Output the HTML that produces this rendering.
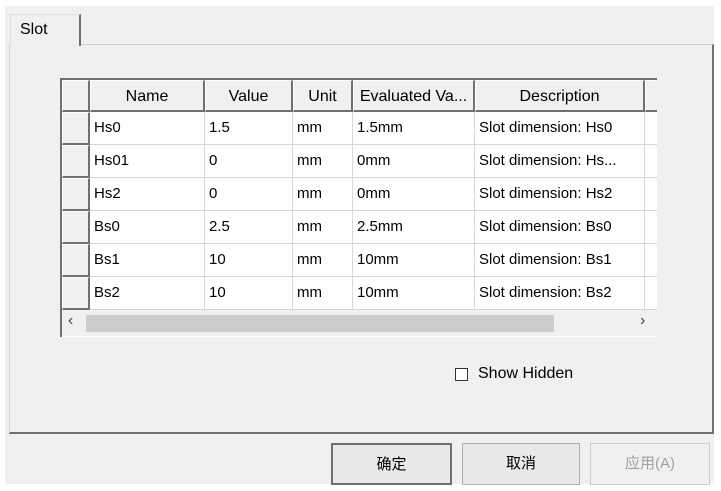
<!DOCTYPE html><html><head><style>
body{margin:0;width:721px;height:491px;background:#fff;position:relative;overflow:hidden;font-family:"Liberation Sans","Noto Sans CJK SC",sans-serif;font-size:15px;color:#000}
.bg{position:absolute;left:5px;top:6px;width:709px;height:478px;background:#f0f0f0}
.panel{position:absolute;left:9px;top:44px;width:702px;height:387px;border:1px solid #d0d0d0;border-right:2px solid #707070;border-bottom:2px solid #707070;background:#f0f0f0}
.tab{position:absolute;left:10px;top:14px;width:68px;height:31px;background:#f0f0f0;border:1px solid #ddd;border-right:2px solid #707070;border-bottom:none;z-index:2}
.tab span{position:absolute;left:9px;top:6px;font-size:16px}
.grid{position:absolute;left:60px;top:78px;width:597px;height:259px;background:#fff}
.c{position:absolute;box-sizing:border-box;border-right:1px solid #d8d8d8;border-bottom:1px solid #d8d8d8;padding-left:4px;line-height:32px;white-space:nowrap;overflow:hidden}
.h{background:#f0f0f0;border-left:1px solid #fff;border-top:1px solid #fff;border-right:2px solid #707070;border-bottom:2px solid #707070;text-align:center;padding:0;line-height:31px;font-size:16px}
.btn{position:absolute;top:443px;height:42px;background:#e8e8e8;border:1px solid #adadad;box-sizing:border-box;text-align:center;line-height:40px;font-size:15px}
</style></head><body>
<div class="bg"></div>
<div class="panel"></div>
<div class="tab"><span>Slot</span></div>
<div class="grid" id="g"></div>
<div style="position:absolute;left:455px;top:368px;width:13px;height:13px;border:1px solid #333;box-sizing:border-box;background:#fff"></div>
<div style="position:absolute;left:478px;top:365px;font-size:16px">Show Hidden</div>
<div class="btn" style="left:331px;width:121px;border:2px solid #707070">确定</div>
<div class="btn" style="left:462px;width:118px">取消</div>
<div class="btn" style="left:590px;width:120px;color:#a0a0a0;background:#f0f0f0;border-color:#ccc">应用(A)</div>
<script>
var g=document.getElementById('g');
var xs=[2,30,145,233,293,415,585,597];
var hd=['','Name','Value','Unit','Evaluated Va...','Description',''];
var rows=[['Hs0','1.5','mm','1.5mm','Slot dimension: Hs0'],['Hs01','0','mm','0mm','Slot dimension: Hs...'],['Hs2','0','mm','0mm','Slot dimension: Hs2'],['Bs0','2.5','mm','2.5mm','Slot dimension: Bs0'],['Bs1','10','mm','10mm','Slot dimension: Bs1'],['Bs2','10','mm','10mm','Slot dimension: Bs2']];
var h='';
for(var i=0;i<7;i++){h+='<div class="c h" style="left:'+xs[i]+'px;top:2px;width:'+(xs[i+1]-xs[i])+'px;height:32px;'+(i==6?'border-right:none':'')+'">'+hd[i]+'</div>';}
for(var r=0;r<6;r++){var t=34+r*33;
h+='<div class="c h" style="left:2px;top:'+t+'px;width:28px;height:33px"></div>';
for(var i=1;i<7;i++){h+='<div class="c" style="left:'+xs[i]+'px;top:'+t+'px;width:'+(xs[i+1]-xs[i])+'px;height:33px;'+(i==6?'border-right:none':'')+'">'+(rows[r][i-1]||'')+'</div>';}}
h+='<div style="position:absolute;left:2px;top:232px;width:595px;height:26px;background:#f0f0f0"></div>';
h+='<div style="position:absolute;left:26px;top:237px;width:468px;height:17px;background:#cdcdcd"></div>';
h+='<div style="position:absolute;left:8px;top:234px;font-size:16px;color:#444">&#8249;</div><div style="position:absolute;left:580px;top:234px;font-size:16px;color:#444">&#8250;</div>';
h+='<div style="position:absolute;left:0;top:0;width:2px;height:259px;background:#707070"></div><div style="position:absolute;left:0;top:0;width:597px;height:2px;background:#707070"></div>';
g.innerHTML=h;
</script>
</body></html>
